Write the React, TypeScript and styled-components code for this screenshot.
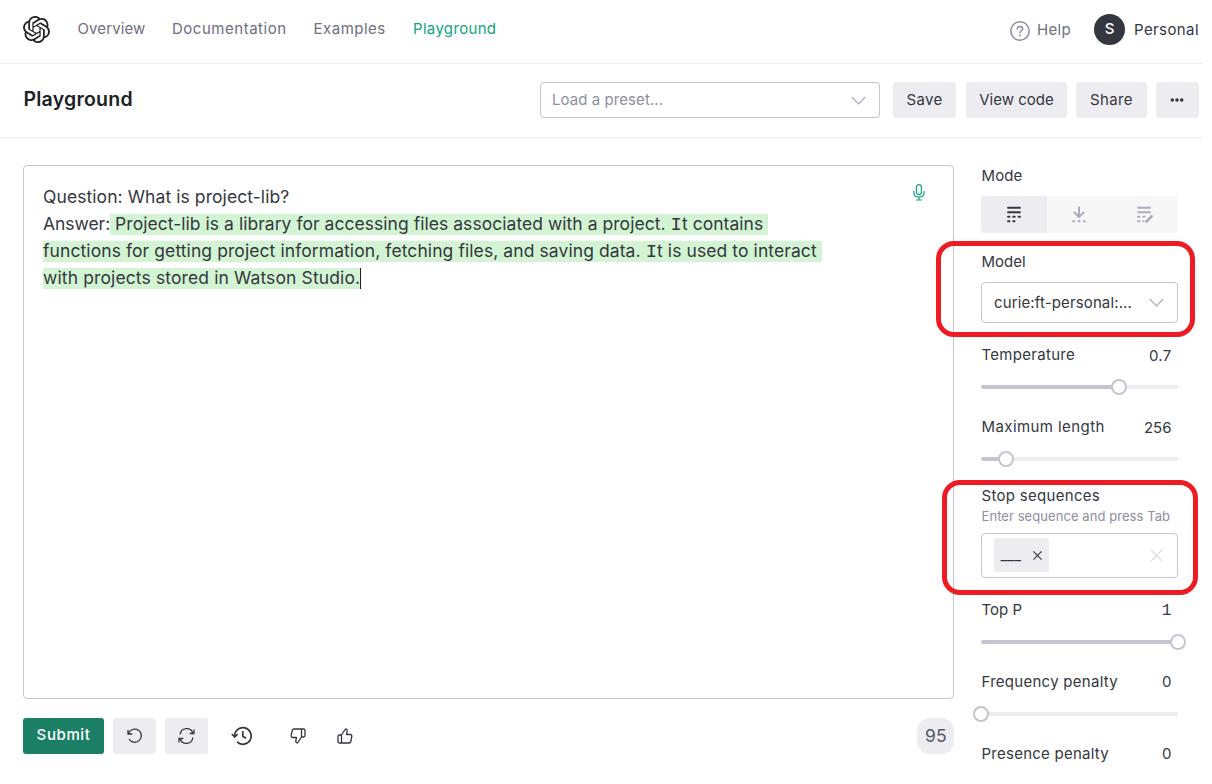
import React from "react";
import styled, { createGlobalStyle } from "styled-components";
import { SiOpenai } from "react-icons/si";

const Global = createGlobalStyle`
  * { box-sizing: border-box; }
  body { margin: 0; background: #fff; overflow: hidden; font-family: Inter, "Liberation Sans", sans-serif; color: #353740; font-size: 15px; }
  button { font: inherit; color: inherit; border: 0; padding: 0; background: none; }
`;

const Page = styled.div`
  position: relative;
  width: 1212px;
  height: 784px;
  overflow: hidden;
`;

const T = styled.span<{ $ls?: number }>`
  letter-spacing: ${(p) => p.$ls ?? 0}px;
  white-space: pre;
  line-height: 20px;
`;

const Header = styled.header`
  width: 1203px;
  height: 64px;
  border-bottom: 1px solid #ececf1;
  display: flex;
  align-items: flex-start;
  padding: 14px 4px 0 23px;
`;
const Logo = styled.div`
  width: 27px;
  height: 27px;
  margin: 2px 27.5px 0 0;
  color: #202123;
  svg { display: block; }
`;
const Nav = styled.nav`
  display: flex;
  flex: 1;
  padding-top: 5px;
  color: #6e6e80;
`;
const NavItem = styled.a<{ $w: number; $active?: boolean }>`
  width: ${(p) => p.$w}px;
  color: ${(p) => (p.$active ? "#10a37f" : "inherit")};
  display: flex;
`;
const Help = styled.div`
  display: flex;
  gap: 7px;
  color: #6e6e80;
  padding-top: 6px;
  width: 84px;
  svg { margin-top: 1px; flex: none; }
`;
const Avatar = styled.div`
  width: 31px;
  height: 31px;
  border-radius: 50%;
  background: #353740;
  color: #fff;
  display: flex;
  align-items: center;
  justify-content: center;
  font-weight: 500;
  padding-bottom: 1px;
`;
const Account = styled.div`
  margin-left: 9px;
  width: 65px;
  padding-top: 6px;
  display: flex;
`;

const Toolbar = styled.section`
  width: 1203px;
  height: 74px;
  border-bottom: 1px solid #ececf1;
  display: flex;
  padding: 18px 4px 0 23px;
`;
const Title = styled.h1`
  margin: 0;
  width: 517px;
  padding-left: 0.5px;
  font-size: 19.5px;
  font-weight: 600;
  color: #202123;
  line-height: 34px;
  letter-spacing: 0.22px;
`;
const Select = styled.div<{ $w: number; $h: number; $muted?: boolean }>`
  width: ${(p) => p.$w}px;
  height: ${(p) => p.$h}px;
  border: 1px solid #c5c5d2;
  border-radius: 4px;
  display: flex;
  align-items: center;
  justify-content: space-between;
  padding: 0 13px 0 ${(p) => (p.$muted ? 11 : 12)}px;
  color: ${(p) => (p.$muted ? "#8e8ea0" : "#353740")};
`;
const Buttons = styled.div`
  display: flex;
  margin-left: 13px;
`;
const Button = styled.button<{ $w: number; $mr?: number; $primary?: boolean }>`
  width: ${(p) => p.$w}px;
  height: 36px;
  margin-right: ${(p) => p.$mr ?? 0}px;
  padding-bottom: ${(p) => (p.$primary ? 2 : 0)}px;
  border-radius: 3px;
  background: ${(p) => (p.$primary ? "#1a7f64" : "#ececf1")};
  color: ${(p) => (p.$primary ? "#fff" : "#353740")};
  font-weight: ${(p) => (p.$primary ? 500 : 400)};
  display: flex;
  align-items: center;
  justify-content: center;
`;
const Dots = styled.svg`
  margin-right: 2px;
`;

const Main = styled.main`
  display: flex;
  padding: 27px 0 0 23px;
`;
const Workspace = styled.section`
  width: 931px;
  margin-right: 27px;
`;
const Editor = styled.div`
  height: 534px;
  border: 1px solid #c5c5d2;
  border-radius: 4px;
  display: flex;
  justify-content: space-between;
  padding: 17px 27px 0 19px;
`;
const Prompt = styled.div`
  font-size: 17.5px;
`;
const Line = styled.div<{ $ls: number }>`
  height: 27px;
  line-height: 27px;
  letter-spacing: ${(p) => p.$ls}px;
  white-space: pre;
`;
const Mark = styled.mark<{ $ls: number }>`
  background: #d2f4d3;
  color: inherit;
  display: inline-block;
  height: 21px;
  line-height: 19px;
  padding-bottom: 2px;
  letter-spacing: ${(p) => p.$ls}px;
`;
const Slab = styled.span`
  font-family: "Liberation Mono", monospace;
  font-size: 1.08em;
  line-height: 1;
`;
const Caret = styled.i`
  display: inline-block;
  width: 1px;
  height: 21px;
  background: #202123;
  vertical-align: top;
  margin-top: 4px;
`;
const Mic = styled.div`
  margin-top: 1px;
`;
const Actions = styled.div`
  display: flex;
  margin-top: 19px;
`;
const IconSlot = styled.span<{ $w: number; $mr: number }>`
  width: ${(p) => p.$w}px;
  height: 36px;
  margin-right: ${(p) => p.$mr}px;
  display: flex;
  align-items: center;
  justify-content: center;
`;
const Count = styled.div`
  margin-left: auto;
  width: 37px;
  height: 36px;
  border-radius: 13px;
  background: #ececf1;
  color: #565869;
  font-size: 17.5px;
  display: flex;
  align-items: center;
  justify-content: center;
  padding-left: 1px;
`;

const Settings = styled.aside`
  width: 197px;
  padding-top: 1px;
`;
const Field = styled.div<{ $h: number }>`
  height: ${(p) => p.$h}px;
`;
const Label = styled.div<{ $gap?: number }>`
  display: flex;
  justify-content: space-between;
  padding: 0 6.5px 0 0.5px;
  height: 20px;
  margin-bottom: ${(p) => p.$gap ?? 0}px;
`;
const Value = styled(T)<{ $drop?: boolean }>`
  padding-top: ${(p) => (p.$drop ? 1 : 0)}px;
`;
const Hint = styled.div`
  font-size: 13px;
  color: #8e8ea0;
  display: flex;
  padding-left: 0.5px;
`;
const Modes = styled.div`
  display: flex;
  height: 37px;
  margin: 10px 0 19px;
  border-radius: 3px;
  background: #f7f7f8;
  overflow: hidden;
`;
const Mode = styled.span<{ $w: number; $on?: boolean }>`
  width: ${(p) => p.$w}px;
  background: ${(p) => (p.$on ? "#ececf1" : "none")};
  color: ${(p) => (p.$on ? "#353740" : "#acacbe")};
  display: flex;
  align-items: center;
  justify-content: center;
`;
const Track = styled.div`
  margin-top: 20px;
  height: 4px;
  border-radius: 2px;
  background: #ececf1;
  display: flex;
  align-items: center;
`;
const Fill = styled.div`
  height: 4px;
  border-radius: 2px;
  background: #c5c5d2;
`;
const Thumb = styled.div`
  width: 16px;
  height: 16px;
  margin: 0 -8px;
  flex: none;
  border-radius: 50%;
  border: 2px solid #c5c5d2;
  background: #fff;
`;
const Tags = styled.div`
  margin-top: 7px;
  height: 45px;
  border: 1px solid #c5c5d2;
  border-radius: 4px;
  display: flex;
  align-items: flex-start;
  justify-content: space-between;
  padding: 4px 14px 0 12px;
`;
const Tag = styled.div`
  width: 55px;
  height: 34px;
  border-radius: 2px;
  background: #ececf1;
  display: flex;
  align-items: center;
  padding: 0 7.5px 0 6.5px;
  justify-content: space-between;
`;
const Clear = styled.span`
  display: flex;
  align-items: center;
  height: 34px;
  padding-top: 1px;
`;
const Outline = styled.div<{ $x: number; $y: number; $w: number; $h: number }>`
  position: absolute;
  left: ${(p) => p.$x}px;
  top: ${(p) => p.$y}px;
  width: ${(p) => p.$w}px;
  height: ${(p) => p.$h}px;
  border: 5px solid #ed1c24;
  border-radius: 18px;
`;

const Chevron = () => (
  <svg width="15" height="9" viewBox="0 0 15 9" fill="none" stroke="#acacbe" strokeWidth="1.2"><path d="M.8 1l6.7 6.8L14.2 1" /></svg>
);
const Cross = ({ size, color }: { size: number; color: string }) => (
  <svg width={size} height={size} viewBox="0 0 10 10" fill="none" stroke={color} strokeWidth={12 / size}><path d="M.5.5l9 9M9.5.5l-9 9" /></svg>
);

function Slider({ label, value, pos, ls, vls, drop, h }: { label: string; value: React.ReactNode; pos?: number; ls: number; vls?: number; drop?: boolean; h: number }) {
  return (
    <Field $h={h}>
      <Label><T $ls={ls}>{label}</T><Value $ls={vls} $drop={drop}>{value}</Value></Label>
      {pos !== undefined && <Track><Fill style={{ width: `${pos}%` }} /><Thumb /></Track>}
    </Field>
  );
}

export default function App() {
  return (
    <Page>
      <Global />
      <Header>
        <Logo><SiOpenai size={27} /></Logo>
        <Nav>
          <NavItem $w={94.5}><T $ls={0.1}>Overview</T></NavItem>
          <NavItem $w={141.5}><T $ls={0.52}>Documentation</T></NavItem>
          <NavItem $w={99.5}><T $ls={0.5}>Examples</T></NavItem>
          <NavItem $w={90} $active><T $ls={0.33}>Playground</T></NavItem>
        </Nav>
        <Help>
          <svg width="20" height="20" viewBox="0 0 20 20" fill="none" stroke="#8e8ea0" strokeWidth="1.5" strokeLinecap="round">
            <circle cx="10" cy="10" r="9.2" /><path d="M7.3 8c0-1.7 1.2-2.6 2.7-2.6s2.7 1 2.7 2.4c0 1.9-2.7 2-2.7 4" /><circle cx="10" cy="14.6" r=".4" />
          </svg>
          <T $ls={0.3}>Help</T>
        </Help>
        <Avatar><T>S</T></Avatar>
        <Account><T $ls={0.4}>Personal</T></Account>
      </Header>
      <Toolbar>
        <Title>Playground</Title>
        <Select $w={340} $h={36} $muted><T $ls={0.07}>Load a preset...</T><Chevron /></Select>
        <Buttons>
          <Button $w={63} $mr={10}><T $ls={0.3}>Save</T></Button>
          <Button $w={101} $mr={9}><T $ls={0.02}>View code</T></Button>
          <Button $w={71} $mr={9}><T $ls={0.35}>Share</T></Button>
          <Button $w={43}>
            <Dots width="14" height="4" viewBox="0 0 14 4" fill="#353740"><circle cx="2.3" cy="2" r="1.8" /><circle cx="7" cy="2" r="1.8" /><circle cx="11.7" cy="2" r="1.8" /></Dots>
          </Button>
        </Buttons>
      </Toolbar>
      <Main>
        <Workspace>
          <Editor>
            <Prompt>
              <Line $ls={0.08}>Question: What is project-lib?</Line>
              <Line $ls={-0.05}>Answer:<Mark $ls={0.04}> Project-lib is a library for accessing files associated with a project. <Slab>I</Slab>t contains </Mark></Line>
              <Line $ls={0}><Mark $ls={0.085}>functions for getting project information, fetching files, and saving data. <Slab>I</Slab>t is used to interact </Mark></Line>
              <Line $ls={0}><Mark $ls={0.12}>with projects stored in Watson Studio.</Mark><Caret /></Line>
            </Prompt>
            <Mic>
              <svg width="14" height="17" viewBox="0 0 14 17" fill="none" stroke="#10a37f" strokeWidth="1.2"><rect x="4.4" y=".6" width="5" height="10" rx="2.5" /><path d="M1.8 7v1.5c0 2.8 2 4.6 5.1 4.6s5.1-1.8 5.1-4.6V7M6.9 13v3M4 16h6" /></svg>
            </Mic>
          </Editor>
          <Actions>
            <Button $w={81} $mr={9} $primary><T $ls={0.6}>Submit</T></Button>
            <Button $w={43} $mr={9}>
              <svg width="16" height="16" viewBox="0 0 16 16" fill="none" stroke="#353740" strokeWidth="1.3"><path d="M1 2v4h4.3M1.4 5.7A6.6 6.6 0 1 1 2 11" /></svg>
            </Button>
            <Button $w={43} $mr={21.5}>
              <svg width="17" height="16" viewBox="0 0 17 16" fill="none" stroke="#353740" strokeWidth="1.3"><path d="M16 1.5v4h-4.3M1 14.5v-4h4.3M2.2 6.5A6.5 6.5 0 0 1 14.8 5M14.8 9.5A6.5 6.5 0 0 1 2.2 11" /></svg>
            </Button>
            <IconSlot $w={24} $mr={36.5}>
              <svg width="22" height="20" viewBox="0 0 22 20" fill="none" stroke="#353740" strokeWidth="1.7"><path d="M3.6 10a8.3 8.3 0 1 1 2.5 5.9M.8 8l2.9 3L6.7 8M11.8 5v5.3l3.3 2" /></svg>
            </IconSlot>
            <IconSlot $w={16} $mr={31}>
              <svg width="16" height="16" viewBox="0 0 16 16" fill="none" stroke="#353740" strokeWidth="1.3" strokeLinejoin="round"><path d="M11.5 1H4Q2.5 1 2.2 2.5L1.2 7.5Q1 9.5 3 9.5h3.5l-.7 3.3Q5.6 15 7.5 15l4-6zM11.5 1H13.5Q15 1 15 2.5V7.5Q15 9 13.5 9H11.5" /></svg>
            </IconSlot>
            <IconSlot $w={16} $mr={0}>
              <svg width="16" height="16" viewBox="0 0 16 16" fill="none" stroke="#353740" strokeWidth="1.3" strokeLinejoin="round"><path d="M4.5 15H12q1.5 0 1.8-1.5l1-5Q15 6.5 13 6.5H9.5l.7-3.3Q10.4 1 8.5 1l-4 6zM4.5 15H2.5Q1 15 1 13.5V8.5Q1 7 2.5 7H4.5" /></svg>
            </IconSlot>
            <Count><T $ls={0.3}>95</T></Count>
          </Actions>
        </Workspace>
        <Settings>
          <Label><T $ls={0.1}>Mode</T></Label>
          <Modes>
            <Mode $w={66} $on>
              <svg width="14" height="17" viewBox="0 0 14 17" stroke="currentColor" strokeWidth="2.1" strokeLinecap="round"><path d="M1.1 1.8h11.8M1.1 6.3h11.8M1.1 10.8h1.3M6.3 10.8h1.4M11.6 10.8h1.3M1.1 15.3h1.3M6.3 15.3h1.2" /></svg>
            </Mode>
            <Mode $w={64}>
              <svg width="14" height="17" viewBox="0 0 14 17" fill="none" stroke="currentColor" strokeWidth="2" strokeLinecap="round"><path d="M7 1.5v9M2.5 6.5l4.5 4.5 4.5-4.5M1.2 15.3h1M6.5 15.3h1M11.8 15.3h1" /></svg>
            </Mode>
            <Mode $w={67}>
              <svg width="15" height="17" viewBox="0 0 15 17" overflow="visible" stroke="currentColor" strokeWidth="2.1" strokeLinecap="round"><path d="M1.1 1.8h11.8M1.1 6.3h11.8M1.1 10.8h1.3M6.3 10.8h1.2M1.1 15.3h1.3M6.3 15.3h.2" /><path d="M9.5 15.5l5-5" strokeWidth="2.6" /></svg>
            </Mode>
          </Modes>
          <Field $h={93}>
            <Label $gap={10}><T>Model</T></Label>
            <Select $w={197} $h={41}><T $ls={0.13}>curie:ft-personal:...</T><Chevron /></Select>
          </Field>
          <Slider label="Temperature" value="0.7" pos={70} ls={0.3} vls={0.3} drop h={72} />
          <Slider label="Maximum length" value="256" pos={12.5} ls={0.42} drop h={69} />
          <Field $h={114}>
            <Label><T $ls={0.3}>Stop sequences</T></Label>
            <Hint><T $ls={0.07}>Enter sequence and press Tab</T></Hint>
            <Tags><Tag><T>___</T><Cross size={9} color="#353740" /></Tag><Clear><Cross size={13} color="#d9d9e3" /></Clear></Tags>
          </Field>
          <Slider label="Top P" value={<Slab>1</Slab>} pos={100} ls={0} h={72} />
          <Slider label="Frequency penalty" value="0" pos={0} ls={0.27} h={72} />
          <Slider label="Presence penalty" value="0" ls={0.25} h={30} />
        </Settings>
      </Main>
      <Outline $x={936} $y={241} $w={259} $h={96} />
      <Outline $x={942} $y={480} $w={256} $h={115} />
    </Page>
  );
}
